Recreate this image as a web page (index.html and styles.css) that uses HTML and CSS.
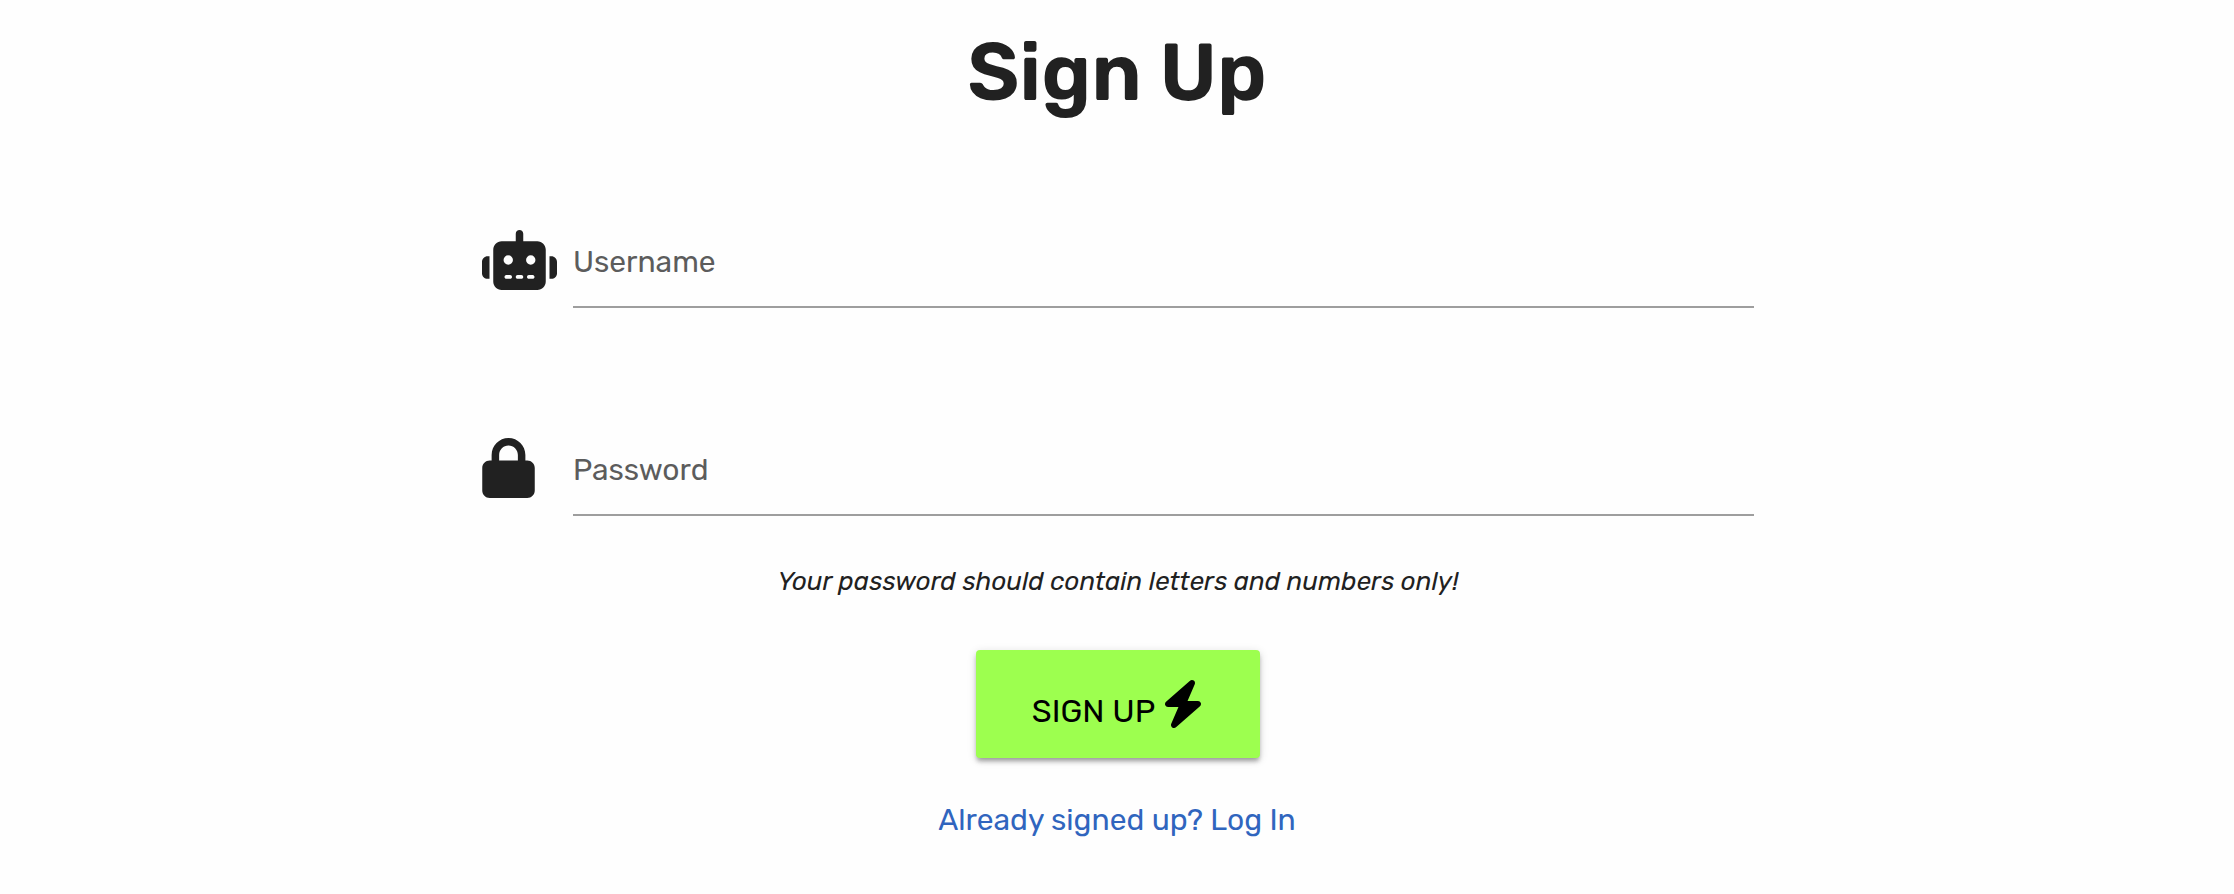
FILE: index.html
```html
<!DOCTYPE html>
<html lang="en">
<head>
<meta charset="utf-8">
<meta name="viewport" content="width=device-width, initial-scale=1">
<title>Sign Up</title>
<link rel="stylesheet" href="styles.css">
</head>
<body>
<main class="page">
  <h1 class="title">Sign Up</h1>
  <form class="form">
    <div class="field">
      <svg class="icon icon-robot" viewBox="0 0 640 512" aria-hidden="true"><path fill-rule="evenodd" d="M320 0c17.700 0 32 14.300 32 32V96H472c39.800 0 72 32.200 72 72V440c0 39.800-32.200 72-72 72H168c-39.800 0-72-32.200-72-72V168c0-39.800 32.200-72 72-72H288V32c0-17.700 14.300-32 32-32zM208 384c-8.800 0-16 7.200-16 16s7.200 16 16 16h32c8.800 0 16-7.200 16-16s-7.200-16-16-16H208zm96 0c-8.800 0-16 7.200-16 16s7.200 16 16 16h32c8.800 0 16-7.200 16-16s-7.200-16-16-16H304zm96 0c-8.800 0-16 7.200-16 16s7.200 16 16 16h32c8.800 0 16-7.200 16-16s-7.200-16-16-16H400zM264 256a40 40 0 1 0 -80 0 40 40 0 1 0 80 0zm152 40a40 40 0 1 0 0-80 40 40 0 1 0 0 80zM48 224H64V416H48c-26.500 0-48-21.500-48-48V272c0-26.500 21.500-48 48-48zm544 0c26.500 0 48 21.500 48 48v96c0 26.500-21.500 48-48 48H576V224h16z"/></svg>
      <div class="control">
        <input class="input" id="username" type="text" placeholder=" " autocomplete="username">
        <label class="label" for="username">Username</label>
      </div>
    </div>
    <div class="field">
      <svg class="icon icon-lock" viewBox="0 0 448 512" aria-hidden="true"><path fill-rule="evenodd" d="M144 144v48H304V144c0-44.200-35.800-80-80-80s-80 35.800-80 80zM80 192V144C80 64.500 144.500 0 224 0s144 64.500 144 144v48h16c35.300 0 64 28.700 64 64V448c0 35.300-28.700 64-64 64H64c-35.300 0-64-28.700-64-64V256c0-35.300 28.700-64 64-64H80z"/></svg>
      <div class="control">
        <input class="input" id="password" type="password" placeholder=" " autocomplete="new-password" aria-describedby="hint">
        <label class="label" for="password">Password</label>
      </div>
    </div>
    <p class="hint" id="hint">Your password should contain letters and numbers only!</p>
    <button class="submit" type="submit">
      <span>SIGN UP</span>
      <svg class="bolt" viewBox="0 0 448 512" aria-hidden="true"><path d="M349.400 44.600c5.900-13.700 1.500-29.700-10.600-38.500s-28.600-8-39.900 1.800l-256 224c-10 8.800-13.600 22.900-8.900 35.300S50.700 288 64 288H175.500L98.600 467.400c-5.900 13.700-1.500 29.700 10.600 38.500s28.600 8 39.900-1.800l256-224c10-8.800 13.600-22.900 8.900-35.300s-16.600-20.700-30-20.700H272.500L349.400 44.600z"/></svg>
    </button>
  </form>
  <a class="login" href="#login">Already signed up? Log In</a>
</main>
</body>
</html>
```
FILE: styles.css
```css
* {
  box-sizing: border-box;
}

body {
  margin: 0;
  background: #fefefe;
  color: #212121;
  font-family: Rubik, Roboto, sans-serif;
  font-size: 30px;
  line-height: 40px;
}

.page {
  display: flex;
  flex-direction: column;
  align-items: center;
  padding: 24px 32px;
}

.title {
  margin: 0;
  font-size: 80px;
  line-height: 98px;
  font-weight: 600;
}

.form {
  display: flex;
  flex-direction: column;
  align-items: center;
  width: 100%;
  max-width: 1274px;
  margin-top: 90px;
  padding-left: 2px;
}

.field {
  display: grid;
  grid-template-columns: 76px 1fr;
  column-gap: 15px;
  width: 100%;
  margin-bottom: 112px;
}

.field:nth-of-type(2) {
  margin-bottom: 46px;
}

.icon {
  height: 60px;
  margin-top: 18px;
  fill: currentColor;
}

.icon-robot {
  width: 75px;
}

.icon-lock {
  width: 53px;
}

.control {
  display: grid;
}

.input,
.label {
  grid-area: 1 / 1;
}

.input {
  width: 100%;
  height: 96px;
  padding: 0;
  border: 0;
  border-bottom: 2px solid #9e9e9e;
  border-radius: 0;
  outline: 0;
  background: transparent;
  color: inherit;
  font: inherit;
}

.input:focus {
  border-bottom-color: #3367c0;
}

.label {
  align-self: center;
  justify-self: start;
  padding-top: 4px;
  color: #5c5c5c;
  pointer-events: none;
}

.input:focus + .label,
.input:not(:placeholder-shown) + .label {
  align-self: start;
  padding-top: 0;
  font-size: 24px;
  line-height: 24px;
}

.hint {
  margin: 0;
  font-size: 26px;
  font-style: italic;
}

.submit {
  display: flex;
  align-items: center;
  justify-content: center;
  gap: 7px;
  min-width: 284px;
  height: 108px;
  margin-top: 48px;
  padding: 0 48px;
  border: 0;
  border-radius: 4px;
  background: #9dff4f;
  box-shadow: 0 4px 4px rgba(0, 0, 0, 0.16), 0 2px 10px rgba(0, 0, 0, 0.14), 0 4px 4px -2px rgba(0, 0, 0, 0.2);
  color: #000;
  font: inherit;
  font-size: 32px;
  cursor: pointer;
}

.submit span {
  padding-top: 14px;
}

.bolt {
  width: 42px;
  height: 48px;
}

.login {
  margin-top: 42px;
  color: #3065be;
  text-decoration: none;
}
```
